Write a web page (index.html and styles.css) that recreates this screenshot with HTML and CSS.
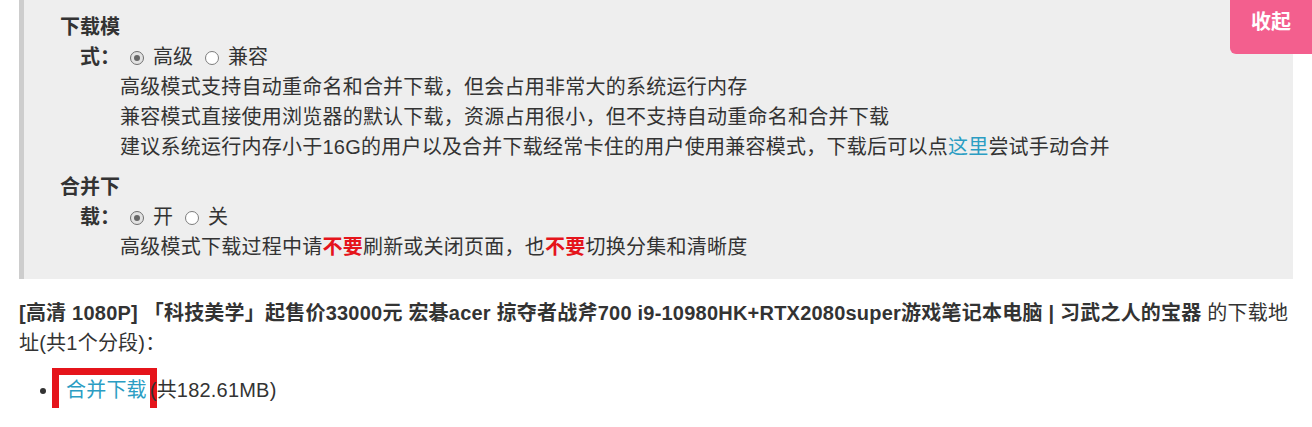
FILE: index.html
```html
<!DOCTYPE html>
<html lang="zh-CN">
<head>
<meta charset="utf-8">
<title>下载</title>
<link rel="stylesheet" href="styles.css">
</head>
<body>
<div class="page">
  <div class="panel">
    <div class="opt">
      <div class="row">
        <span class="lbl">下载模式：</span><span class="choices"><label class="choice"><input type="radio" name="mode" checked>高级</label><label class="choice"><input type="radio" name="mode">兼容</label></span>
      </div>
      <div class="desc">
        <div>高级模式支持自动重命名和合并下载，但会占用非常大的系统运行内存</div>
        <div>兼容模式直接使用浏览器的默认下载，资源占用很小，但不支持自动重命名和合并下载</div>
        <div>建议系统运行内存小于16G的用户以及合并下载经常卡住的用户使用兼容模式，下载后可以点<a class="lnk" href="#">这里</a>尝试手动合并</div>
      </div>
    </div>
    <div class="opt opt2">
      <div class="row">
        <span class="lbl">合并下载：</span><span class="choices"><label class="choice"><input type="radio" name="merge" checked>开</label><label class="choice"><input type="radio" name="merge">关</label></span>
      </div>
      <div class="desc">
        <div>高级模式下载过程中请<strong class="warn">不要</strong>刷新或关闭页面，也<strong class="warn">不要</strong>切换分集和清晰度</div>
      </div>
    </div>
  </div>
  <p class="title"><strong>[高清 1080P] 「科技美学」起售价33000元 宏碁acer 掠夺者战斧700 i9-10980HK+RTX2080super游戏笔记本电脑 | 习武之人的宝器</strong> 的下载地址(共1个分段)：</p>
  <ul class="parts">
    <li><a class="lnk dl" href="#">合并下载</a>(共182.61MB)</li>
  </ul>
</div>
<div class="collapse">收起</div>
</body>
</html>
```
FILE: styles.css
```css
html, body {
  margin: 0;
  padding: 0;
  background: #fff;
}
body {
  font-family: "Liberation Sans", "Noto Sans CJK SC", sans-serif;
  font-size: 20px;
  line-height: 30px;
  color: #333;
}
.page {
  margin-left: 19px;
  width: 1274px;
}
.panel {
  background: #eeeeee;
  border-left: 5px solid #cdcdcd;
  padding: 12px 0 17px 36px;
}
.opt2 {
  margin-top: 10px;
}
.lbl {
  display: inline-block;
  width: 60px;
  text-align: right;
  font-weight: bold;
  vertical-align: baseline;
}
.choices {
  margin-left: 10px;
}
.choice {
  margin-right: 12px;
}
.choice input {
  -webkit-appearance: none;
  appearance: none;
  width: 14px;
  height: 14px;
  margin: 0 9px 0 0;
  border: 1px solid #7d7d7d;
  border-radius: 50%;
  background: #fff;
  box-sizing: border-box;
  vertical-align: -1px;
  position: relative;
}
.choice input:checked {
  background: #e2e2e2;
  border-color: #707070;
}
.choice input:checked::after {
  content: "";
  position: absolute;
  left: 3px;
  top: 3px;
  width: 6px;
  height: 6px;
  border-radius: 50%;
  background: #666;
}
.desc {
  padding-left: 60px;
  letter-spacing: 0.24px;
}
.lnk {
  color: #2b9dc3;
  text-decoration: none;
}
.warn {
  color: #e5141b;
  font-weight: bold;
}
.title {
  margin: 19px 0 0 0;
  letter-spacing: 0.22px;
}
.parts {
  margin: 17px 0 0 0;
  padding-left: 40px;
  letter-spacing: 0.2px;
}
.dl {
  display: inline-block;
  padding: 0 3px 3px 7px;
  line-height: 30px;
  vertical-align: top;
  outline: 7px solid #e5141b;
  background: #fff;
}
.collapse {
  position: absolute;
  top: 0;
  right: 0;
  width: 82px;
  height: 54px;
  line-height: 44px;
  text-align: center;
  background: #f35f8e;
  color: #fff;
  font-weight: bold;
  border-bottom-left-radius: 6px;
}
```
